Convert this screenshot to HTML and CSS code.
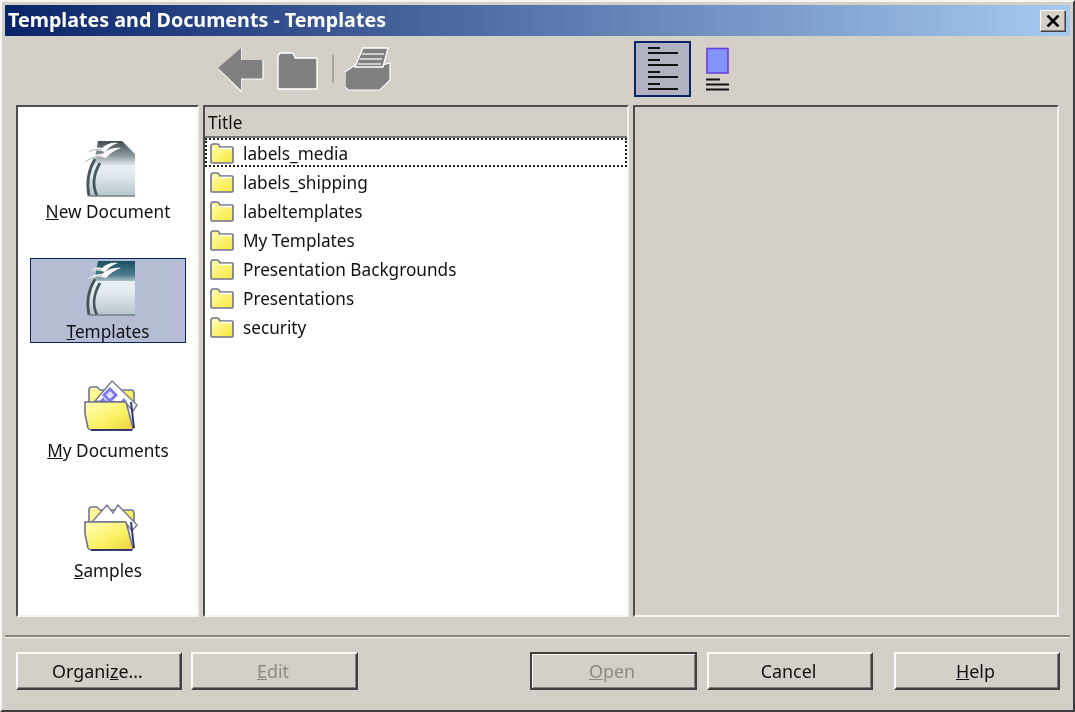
FILE: index.html
```html
<!DOCTYPE html>
<html lang="en">
<head>
<meta charset="utf-8">
<title>Templates and Documents - Templates</title>
<link rel="stylesheet" href="styles.css">
</head>
<body>
<svg class="defs" width="0" height="0" aria-hidden="true">
  <defs>
    <linearGradient id="fy" x1="0" y1="0" x2="1" y2="1"><stop offset="0" stop-color="#ffffb0"/><stop offset="1" stop-color="#f8e63c"/></linearGradient>
    <linearGradient id="fy2" x1="0" y1="0" x2="1" y2="1"><stop offset="0" stop-color="#ffffb8"/><stop offset=".6" stop-color="#fbf060"/><stop offset="1" stop-color="#e8cf40"/></linearGradient>
    <linearGradient id="body" x1="0" y1="0" x2="0" y2="1"><stop offset="0" stop-color="#f7fafa"/><stop offset=".6" stop-color="#e2eaee"/><stop offset="1" stop-color="#b4c5cc"/></linearGradient>
    <linearGradient id="band" x1="0" y1="0" x2="0" y2="1"><stop offset="0" stop-color="#1c4f63"/><stop offset=".7" stop-color="#4e7c8c"/><stop offset="1" stop-color="#a8bec6"/></linearGradient>
    <linearGradient id="bandgrey" x1="0" y1="0" x2="0" y2="1"><stop offset="0" stop-color="#3f4c52"/><stop offset=".6" stop-color="#8b989e"/><stop offset="1" stop-color="#dfe6e9"/></linearGradient>
    <symbol id="sf" viewBox="0 0 24 22">
      <path d="M1 20V5q0-3 2-3h4q2 0 3 3h12q1 0 1 1v14q0 1-1 1H2q-1 0-1-1z" fill="url(#fy)" stroke="#6f7390" stroke-width="1.600"/>
      <path d="M2.500 6.500h2M10 6.500h12" stroke="#fff" stroke-width="1.400"/>
    </symbol>
    <symbol id="gulls" viewBox="0 0 56 58">
      <path d="M9 13C14 8 18 8 22 9 26 5 32 3 38 4 32 6 28 9 25 13 20 11 15 11 9 13z" fill="#fff"/>
      <path d="M5 23C10 17 16 15 22 15 28 10 34 8 41 9 35 11 30 14 26 19 20 17 12 18 5 23z" fill="#fff"/>
      <path d="M9 13C14 10 18 10 22 11M5 23C10 19 16 17 22 17" stroke="#a5aeb3" stroke-width="1" fill="none"/>
    </symbol>
    <symbol id="ofolder" viewBox="0 0 60 58">
      <path d="M11 26V12q0-3 3-3h5l3 3h31q3 0 3 3v12z" fill="url(#fy)" stroke="#707590" stroke-width="1.600"/>
    </symbol>
    <symbol id="ofront" viewBox="0 0 60 58">
      <path d="M7 24H48l7 26q0 2-3 2H13q-2 0-3-2L7 36z" fill="url(#fy2)" stroke="#6f7390" stroke-width="1.600"/>
      <path d="M53 24l3 26" stroke="#353a6a" stroke-width="2"/>
      <path d="M13 52H54" stroke="#34386a" stroke-width="2"/>
    </symbol>
  </defs>
</svg>
<div class="window">
  <header class="titlebar">
    <span class="title">Templates and Documents - Templates</span>
    <span class="close"><svg width="14" height="12" viewBox="0 0 14 12"><path d="M1.500 0.500L12.500 11.500M12.500 0.500L1.500 11.500" stroke="#000" stroke-width="2.600"/></svg></span>
  </header>

  <div class="toolbar">
    <svg class="tool-back" width="46" height="56" viewBox="0 0 46 56">
      <path d="M1 28L23 8V20H45V38H23V50z" fill="#808080" stroke="#fff" stroke-width="1.200"/>
      <path d="M0 27L23 7V19H44V37H23V49z" fill="#808080"/>
    </svg>
    <svg class="tool-folder" width="42" height="56" viewBox="0 0 42 56">
      <path d="M1 48V17Q1 12 5 12H14Q17 12 18 17H40V48z" fill="#808080" stroke="#fff" stroke-width="1.400"/>
      <path d="M2 47V18Q2 13 6 13H14Q16 13 17 18H39V47z" fill="#808080"/>
    </svg>
    <span class="tool-sep"></span>
    <svg class="tool-print" width="46" height="56" viewBox="0 0 46 56">
      <path d="M0 31L10 24H38L45 22V39L35 49H3L0 46z" fill="#808080" stroke="#fff" stroke-width="1.200"/>
      <path d="M18 7H43L38 26H10z" fill="#808080" stroke="#fff" stroke-width="1.400"/>
      <path d="M17 13H39M15 18H37M13 23H36" stroke="#e8e8e8" stroke-width="1.400"/>
    </svg>
    <span class="view-btn">
      <svg width="30" height="44" viewBox="0 0 30 44">
        <path d="M0 1h12M0 6h30M0 13h12M0 18h30M0 25h12M0 30h30M0 37h12M0 42h30" stroke="#111" stroke-width="2"/>
      </svg>
    </span>
    <svg class="tool-doc" width="23" height="56" viewBox="0 0 23 56">
      <rect x="1" y="7.500" width="21" height="24.500" fill="#8494ff" stroke="#6a3fe0" stroke-width="1.600"/>
      <path d="M0 38.500h14M0 43.500h23M0 48.500h23" stroke="#111" stroke-width="2"/>
    </svg>
  </div>

  <main class="panels">
    <nav class="panel places">
      <div class="place">
        <svg class="place-icon" width="56" height="58" viewBox="0 0 56 58">
          <path d="M12 22C7 32 7 45 9 57H55V15L42 2H20z" fill="url(#body)"/>
          <path d="M18 2H42L55 15V26H14z" fill="url(#bandgrey)"/>
          <path d="M15 20C9 30 6 42 9 57M20 24C14 34 12 46 17 57" stroke="#46565c" stroke-width="2.800" fill="none"/>
          <path d="M9 57H55" stroke="#6f8088" stroke-width="1.400"/>
          <use href="#gulls" width="56" height="58"/>
        </svg>
        <span class="place-label"><u>N</u>ew Document</span>
      </div>
      <div class="place selected">
        <svg class="place-icon" width="56" height="58" viewBox="0 0 56 58">
          <path d="M12 22C7 32 7 45 9 56H55V2H20z" fill="url(#body)"/>
          <path d="M18 2H55V22H14z" fill="url(#band)"/>
          <path d="M15 20C9 30 6 42 9 56M20 24C14 34 12 46 17 56" stroke="#46565c" stroke-width="2.800" fill="none"/>
          <path d="M9 56H55" stroke="#6f8088" stroke-width="1.400"/>
          <use href="#gulls" width="56" height="58"/>
        </svg>
        <span class="place-label"><u>T</u>emplates</span>
      </div>
      <div class="place">
        <svg class="place-icon" width="60" height="58" viewBox="0 0 60 58">
          <use href="#ofolder" width="60" height="58"/>
          <path d="M17 23L34 3 59 27 55 33 47 24z" fill="#fff" stroke="#777b92" stroke-width="1.400"/>
          <path d="M32 9l8 8-8 8-8-8z" fill="#7d78f0"/>
          <path d="M32 13l4 4-4 4-4-4z" fill="#e3e4ff"/>
          <path d="M22 23l3-4 3 4zM43 23l3-3 3 4z" fill="#7d78f0"/>
          <use href="#ofront" width="60" height="58"/>
        </svg>
        <span class="place-label"><u>M</u>y Documents</span>
      </div>
      <div class="place">
        <svg class="place-icon" width="60" height="58" viewBox="0 0 60 58">
          <use href="#ofolder" width="60" height="58"/>
          <path d="M14 24L29 7 35 15 40 7 59 27 54 33 47 24z" fill="#fff" stroke="#777b92" stroke-width="1.400"/>
          <use href="#ofront" width="60" height="58"/>
        </svg>
        <span class="place-label"><u>S</u>amples</span>
      </div>
    </nav>

    <section class="panel listing">
      <div class="col-head">Title</div>
      <ul class="rows">
        <li class="row focused"><svg class="fi" width="24" height="22"><use href="#sf" width="24" height="22"/></svg>labels_media</li>
        <li class="row"><svg class="fi" width="24" height="22"><use href="#sf" width="24" height="22"/></svg>labels_shipping</li>
        <li class="row"><svg class="fi" width="24" height="22"><use href="#sf" width="24" height="22"/></svg>labeltemplates</li>
        <li class="row"><svg class="fi" width="24" height="22"><use href="#sf" width="24" height="22"/></svg>My Templates</li>
        <li class="row"><svg class="fi" width="24" height="22"><use href="#sf" width="24" height="22"/></svg>Presentation Backgrounds</li>
        <li class="row"><svg class="fi" width="24" height="22"><use href="#sf" width="24" height="22"/></svg>Presentations</li>
        <li class="row"><svg class="fi" width="24" height="22"><use href="#sf" width="24" height="22"/></svg>security</li>
      </ul>
    </section>

    <section class="panel preview"></section>
  </main>

  <div class="separator"></div>

  <footer class="buttons">
    <button class="btn wide">Organi<u>z</u>e...</button>
    <button class="btn wide gap-edit" disabled><u>E</u>dit</button>
    <button class="btn wide default" disabled><u>O</u>pen</button>
    <button class="btn">Cancel</button>
    <button class="btn gap-help"><u>H</u>elp</button>
  </footer>
</div>
</body>
</html>
```
FILE: styles.css
```css
* { box-sizing: border-box; }
html, body { margin: 0; padding: 0; }
body {
  width: 1075px;
  height: 712px;
  overflow: hidden;
  font-family: "Noto Sans", "DejaVu Sans", sans-serif;
  font-size: 17.200px;
  color: #111;
  background: #d4d0c8;
}
.defs { display: block; height: 0; }
.window {
  width: 1075px;
  height: 712px;
  padding: 3px;
  background: #d4d0c8;
  border: 2px solid;
  border-color: #f6f5f2 #404040 #404040 #f6f5f2;
  display: flex;
  flex-direction: column;
  filter: blur(0.4px);
}
.titlebar {
  height: 31px;
  flex: none;
  padding: 0 4px 0 3px;
  display: flex;
  align-items: center;
  justify-content: space-between;
  background: linear-gradient(90deg, #0a246a, #a6caf0);
}
.title { color: #fff; font-weight: 700; font-size: 19.700px; line-height: 29px; padding-bottom: 2px; }
.close {
  width: 26px;
  height: 22px;
  display: flex;
  align-items: center;
  justify-content: center;
  background: #d4d0c8;
  border: 1px solid;
  border-color: #fff #404040 #404040 #fff;
  box-shadow: inset -1px -1px #808080;
}
.toolbar {
  height: 69px;
  flex: none;
  display: flex;
  align-items: center;
  padding: 0 0 4px 213px;
}
.tool-folder { margin-left: 13px; }
.tool-sep { width: 2px; height: 28px; margin: 0 11px 0 13px; background: #aaa79f; }
.view-btn {
  width: 57px;
  height: 56px;
  margin-left: 243px;
  border: 2px solid #0a246a;
  background: #b0b3bf;
  display: flex;
  align-items: center;
  justify-content: center;
}
.tool-doc { margin-left: 15px; }
.panels {
  height: 512px;
  flex: none;
  margin-left: 11px;
  display: grid;
  grid-template-columns: 183px 426px 426px;
  column-gap: 4px;
}
.panel {
  border: 2px solid;
  border-color: #4d4d4d #f4f3f0 #f4f3f0 #4d4d4d;
  min-height: 0;
}
.places {
  background: #fff;
  padding: 31px 11px 0 12px;
  display: flex;
  flex-direction: column;
  gap: 34.500px;
}
.place {
  height: 85px;
  flex: none;
  display: flex;
  flex-direction: column;
  align-items: center;
  padding-top: 1px;
}
.place-icon { flex: none; }
.place-label { line-height: 24px; margin-top: 3px; white-space: nowrap; }
.selected {
  background: #b4bdd4;
  outline: 1px dotted #0a246a;
  outline-offset: -1px;
  box-shadow: inset 0 0 0 1px #0a246a;
}
.listing { background: #fff; display: flex; flex-direction: column; }
.col-head {
  height: 31px;
  flex: none;
  padding: 2px 3px 0;
  line-height: 27px;
  background: #d4d0c8;
  border-bottom: 2px solid #777;
}
.rows { list-style: none; margin: 0; padding: 0; }
.row {
  height: 29px;
  display: flex;
  align-items: center;
  padding: 1px 0 0 3px;
  white-space: nowrap;
  line-height: 27px;
  border: 2px solid transparent;
}
.focused { border: 2px dotted #222; }
.fi { flex: none; margin-right: 9px; }
.preview { background: #d4d0c8; }
.separator {
  height: 3px;
  flex: none;
  margin-top: 18px;
  background: #f6f5f2;
  border-top: 2px solid #8a8780;
}
.buttons {
  margin-top: 14px;
  padding: 0 10px 0 11px;
  display: flex;
  align-items: flex-start;
}
.btn {
  width: 166px;
  height: 38px;
  padding: 0 3px 0 0;
  font-family: inherit;
  font-size: 17.900px;
  color: #111;
  background: #d4d0c8;
  border: 2px solid;
  border-color: #fafaf8 #404040 #404040 #fafaf8;
  box-shadow: inset -1px -1px #808080;
  margin-left: 10px;
}
.wide { width: 167px; }
.btn:first-child { margin-left: 0; width: 166px; }
.gap-edit { margin-left: 9px; }
.default {
  margin-left: auto;
  border-color: #404040;
  box-shadow: inset 1px 1px #fafaf8, inset -1px -1px #808080;
}
.gap-help { margin-left: 21px; }
.btn:disabled { color: #8c8a85; }
```
